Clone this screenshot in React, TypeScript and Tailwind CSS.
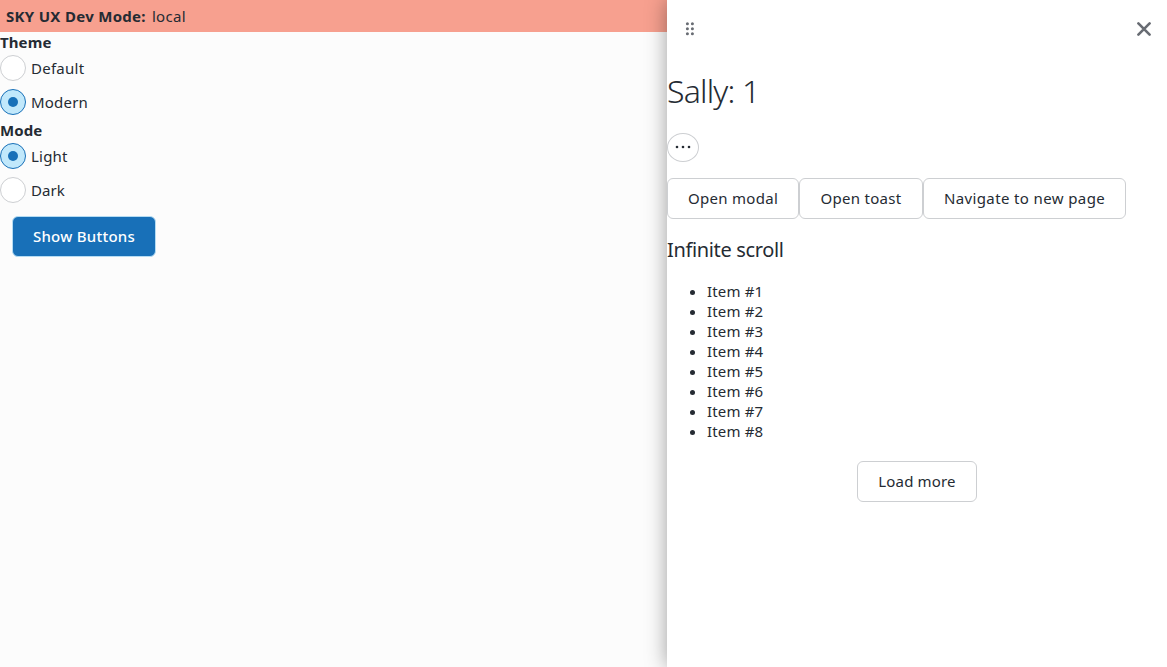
import type { ReactNode } from 'react';

function Radio({ label, checked, tracking }: { label: string; checked?: boolean; tracking: string }) {
  return (
    <label className="flex h-[26px] items-center gap-[5px]">
      <span
        className={`flex size-[26px] shrink-0 items-center justify-center rounded-full border ${
          checked ? 'border-[#1870b8] bg-[#c1e8fb]' : 'border-[#cdcfd2] bg-white'
        }`}
      >
        {checked && <span className="size-[10px] rounded-full bg-[#1870b8]" />}
      </span>
      <span className={`whitespace-nowrap ${tracking}`}>{label}</span>
    </label>
  );
}

function Button({ children, className }: { children: ReactNode; className: string }) {
  return (
    <button
      className={`flex h-[41px] shrink-0 items-center justify-center whitespace-nowrap rounded-[6px] border border-[#cdcfd2] bg-white pb-[2px] ${className}`}
    >
      {children}
    </button>
  );
}

const items = [1, 2, 3, 4, 5, 6, 7, 8];

export default function App() {
  return (
    <div className="flex h-[667px] w-[1167px] overflow-hidden bg-[#fcfcfc] font-['Noto_Sans',sans-serif] text-[15px] leading-5 text-[#252b33]">
      <main className="w-[667px] shrink-0">
        <div className="flex h-8 items-center gap-[6px] bg-[#f7a08f] pl-[6px]">
          <b className="tracking-[0.3px]">SKY UX Dev Mode:</b>
          <span className="tracking-[0.3px]">local</span>
        </div>
        <div className="font-bold tracking-[0.1px]">Theme</div>
        <div className="flex flex-col gap-2 pt-[3px] pb-[5px]">
          <Radio label="Default" tracking="tracking-[0.25px]" />
          <Radio label="Modern" checked tracking="tracking-[0.2px]" />
        </div>
        <div className="font-bold tracking-[0.1px]">Mode</div>
        <div className="flex flex-col gap-2 pt-[3px]">
          <Radio label="Light" checked tracking="tracking-[0.2px]" />
          <Radio label="Dark" tracking="tracking-[0.1px]" />
        </div>
        <button className="mt-[13px] ml-3 flex h-[41px] w-[144px] items-center justify-center rounded-[6px] border border-[#b5dcf3] bg-[#1870b8] pb-[2px] font-medium tracking-[0.25px] whitespace-nowrap text-white">
          Show Buttons
        </button>
      </main>

      <aside className="relative h-[667px] w-[500px] shrink-0 bg-white shadow-[0_0_20px_rgba(0,0,0,0.38)]">
        <header className="flex h-[57px] items-center justify-between pr-4 pl-[18px]">
          <svg width="10" height="14" viewBox="0 0 10 14" fill="#686c73" aria-hidden="true">
            <circle cx="2.4" cy="1.7" r="1.5" />
            <circle cx="7.4" cy="1.7" r="1.5" />
            <circle cx="2.4" cy="6.7" r="1.5" />
            <circle cx="7.4" cy="6.7" r="1.5" />
            <circle cx="2.4" cy="11.7" r="1.5" />
            <circle cx="7.4" cy="11.7" r="1.5" />
          </svg>
          <button aria-label="Close">
            <svg width="14" height="14" viewBox="0 0 14 14" stroke="#686c73" strokeWidth="2.6" strokeLinecap="round">
              <path d="M1.4 1.4 12.6 12.6M12.6 1.4 1.4 12.6" />
            </svg>
          </button>
        </header>
        <h1 className="mt-[14px] h-10 text-[32px] leading-10 font-light tracking-[-0.8px]">Sally: 1</h1>
        <button
          aria-label="More"
          className="mt-[22px] flex h-[29px] w-8 items-center justify-center rounded-[50%] border border-[#cdcfd2] pb-px"
        >
          <svg width="16" height="4" viewBox="0 0 16 4" fill="#252b33">
            <circle cx="2" cy="2" r="1.3" />
            <circle cx="8" cy="2" r="1.3" />
            <circle cx="14" cy="2" r="1.3" />
          </svg>
        </button>
        <div className="mt-4 flex">
          <Button className="w-[132px] tracking-[0.3px]">Open modal</Button>
          <Button className="w-[124px] tracking-[0.3px]">Open toast</Button>
          <Button className="w-[203px] tracking-[0.38px]">Navigate to new page</Button>
        </div>
        <h2 className="mt-[19px] text-[20px] leading-6 tracking-[-0.35px]">Infinite scroll</h2>
        <ul className="mt-[19px] list-disc pl-10 tracking-[0.15px]">
          {items.map((n) => (
            <li key={n}>Item #{n}</li>
          ))}
        </ul>
        <div className="mt-5 flex justify-center">
          <Button className="w-[120px] tracking-[0.15px]">Load more</Button>
        </div>
      </aside>
    </div>
  );
}
